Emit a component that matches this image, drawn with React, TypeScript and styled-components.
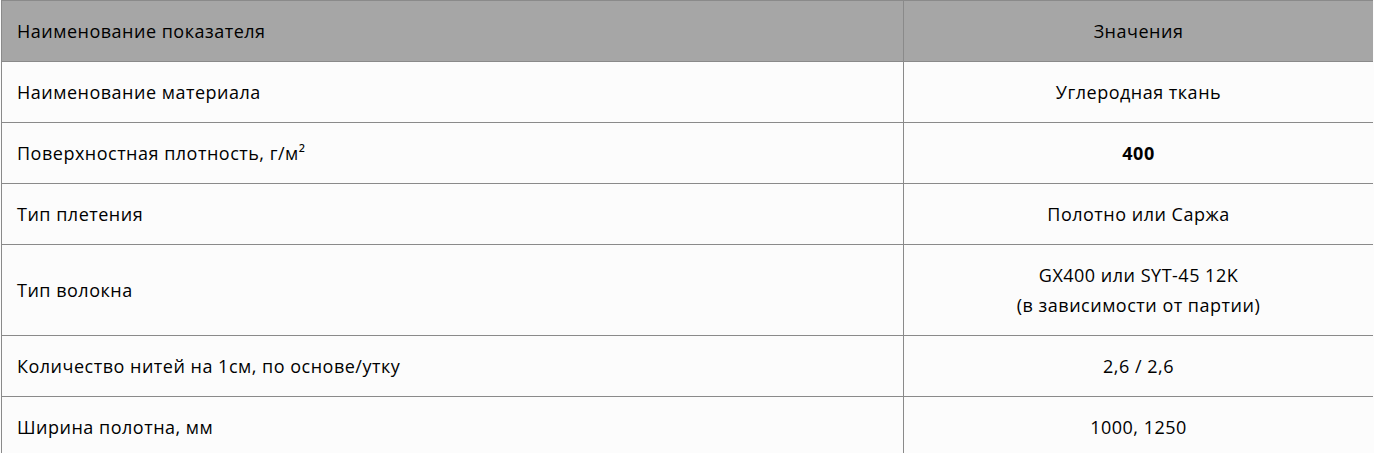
import React from "react";
import styled, { createGlobalStyle } from "styled-components";

const GlobalStyle = createGlobalStyle`
  body {
    margin: 0;
    background: #fcfcfc;
    font-family: "Open Sans", "Noto Sans", sans-serif;
  }
`;

interface Spec {
  name: string;
  value: React.ReactNode;
  bold?: boolean;
}

const specs: Spec[] = [
  { name: "Наименование материала", value: "Углеродная ткань" },
  { name: "Поверхностная плотность, г/м²", value: "400", bold: true },
  { name: "Тип плетения", value: "Полотно или Саржа" },
  {
    name: "Тип волокна",
    value: (
      <>
        GX400 или SYT-45 12K
        <br />
        (в зависимости от партии)
      </>
    ),
  },
  { name: "Количество нитей на 1см, по основе/утку", value: "2,6 / 2,6" },
  { name: "Ширина полотна, мм", value: "1000, 1250" },
];

export default function App() {
  return (
    <>
      <GlobalStyle />
      <Wrap>
        <Table>
          <colgroup>
            <col style={{ width: 902 }} />
            <col />
          </colgroup>
          <thead>
            <tr>
              <HeadCell>Наименование показателя</HeadCell>
              <HeadCell $center>Значения</HeadCell>
            </tr>
          </thead>
          <tbody>
            {specs.map((s) => (
              <tr key={s.name}>
                <Cell>{s.name}</Cell>
                <Cell $center $bold={s.bold}>
                  {s.value}
                </Cell>
              </tr>
            ))}
          </tbody>
        </Table>
      </Wrap>
    </>
  );
}

const Wrap = styled.div`
  padding-left: 1px;
  width: 1372px;
`;

const Table = styled.table`
  width: 100%;
  border-collapse: collapse;
  table-layout: fixed;
  font-size: 18px;
  letter-spacing: 0.5px;
  color: #000;
`;

const HeadCell = styled.th<{ $center?: boolean }>`
  background: #a6a6a6;
  font-weight: 400;
  text-align: ${(p) => (p.$center ? "center" : "left")};
  padding: 15px 15px;
  line-height: 30px;
  border-top: 1px solid #8a8a8a;
  border-bottom: 1px solid #8a8a8a;
  border-left: 1px solid #8a8a8a;
`;

const Cell = styled.td<{ $center?: boolean; $bold?: boolean }>`
  text-align: ${(p) => (p.$center ? "center" : "left")};
  font-weight: ${(p) => (p.$bold ? 700 : 400)};
  padding: 15px 15px;
  line-height: 30px;
  border-bottom: 1px solid #8a8a8a;
  border-left: 1px solid #8a8a8a;
`;
